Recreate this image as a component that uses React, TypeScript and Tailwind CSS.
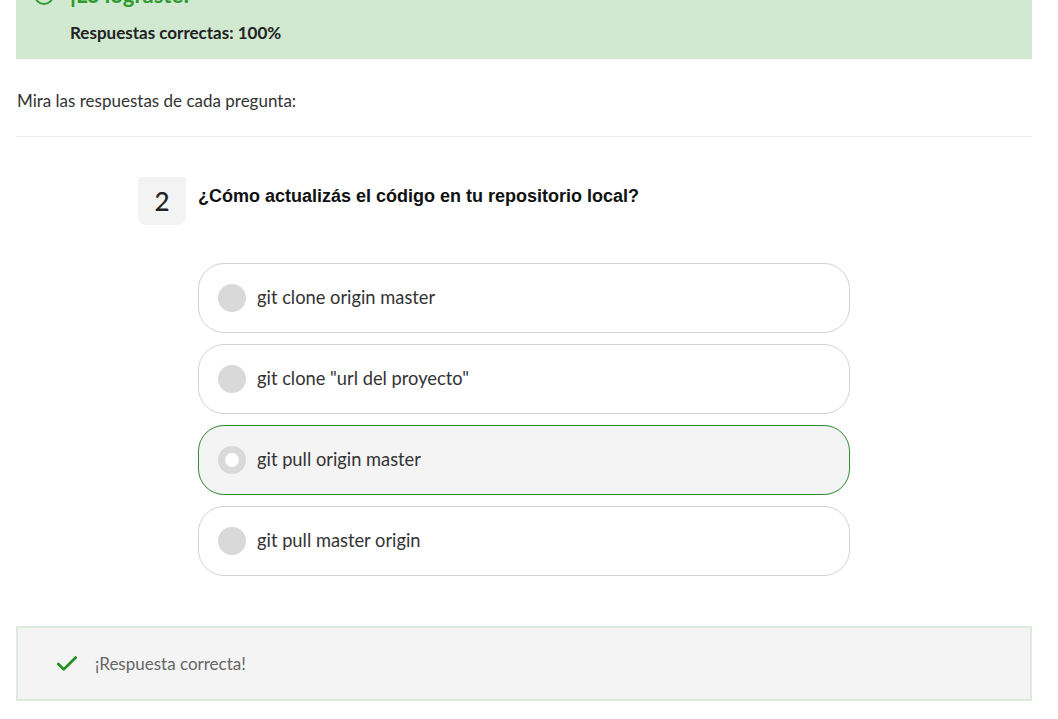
import { Check } from 'lucide-react';

const options = [
  { text: 'git clone origin master', selected: false },
  { text: 'git clone "url del proyecto"', selected: false },
  { text: 'git pull origin master', selected: true },
  { text: 'git pull master origin', selected: false },
];

function Option({ text, selected }: { text: string; selected: boolean }) {
  return (
    <div
      className={
        selected
          ? 'flex items-center h-[70px] rounded-[26px] border border-[#2e8b2e] bg-[#f4f4f4] pl-[19px]'
          : 'flex items-center h-[70px] rounded-[26px] border border-[#d3d3d3] bg-white pl-[19px]'
      }
    >
      <span className="flex items-center justify-center w-[28px] h-[28px] rounded-full bg-[#d9d9d9]">
        {selected && <span className="w-[14px] h-[14px] rounded-full bg-white" />}
      </span>
      <span className="ml-[11px] text-[18.3px] text-[#333]">{text}</span>
    </div>
  );
}

export default function App() {
  return (
    <div className="bg-white min-h-[719px] pl-[16px] pr-[26px] overflow-hidden font-['Lato','Open_Sans',sans-serif]">
      <div className="-mt-[36px] bg-[#d1e9d1] pt-[14px] pb-[13px] pl-[18px]">
        <div className="flex items-center gap-[16px]">
          <span className="w-[20px] h-[20px] rounded-full border-2 border-[#2e9a2e]" />
          <span className="text-[22px] font-bold text-[#2e9a2e]">¡Lo lograste!</span>
        </div>
        <div className="mt-[9px] pl-[36px] text-[17px] font-bold text-[#222]">
          Respuestas correctas: 100%
        </div>
      </div>

      <div className="pt-[29px] pb-[23px] pl-[1px] text-[17px] text-[#333] border-b border-[#ececec]">
        Mira las respuestas de cada pregunta:
      </div>

      <div className="pl-[122px] pt-[40px]">
        <div className="flex items-start gap-[12px]">
          <div className="flex items-center justify-center w-[48px] h-[48px] rounded-b-[8px] bg-[#f3f3f3] text-[26px] font-medium text-[#222]">
            2
          </div>
          <div className="pt-[6px] text-[18px] font-bold text-[#111] font-['Liberation_Sans',Arial,sans-serif]">
            ¿Cómo actualizás el código en tu repositorio local?
          </div>
        </div>

        <div className="ml-[60px] mt-[38px] w-[652px] flex flex-col gap-[11px]">
          {options.map((o) => (
            <Option key={o.text} text={o.text} selected={o.selected} />
          ))}
        </div>
      </div>

      <div className="mt-[50px] flex items-center h-[75px] bg-[#f4f4f4] border-2 border-[#dfeadf] pl-[36px]">
        <Check size={26} strokeWidth={2.5} className="text-[#1f8f1f]" />
        <span className="ml-[15px] text-[17px] text-[#666]">¡Respuesta correcta!</span>
      </div>
    </div>
  );
}
